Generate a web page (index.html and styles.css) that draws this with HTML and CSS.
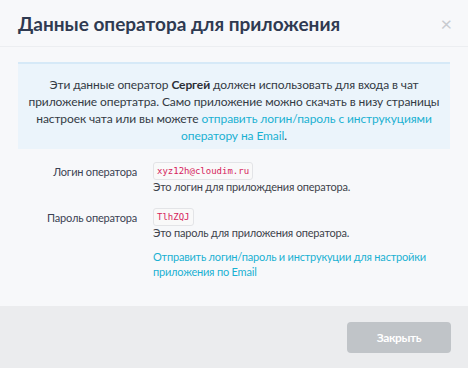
FILE: index.html
```html
<!DOCTYPE html>
<html lang="ru">

<head>
  <meta charset="utf-8">
  <title>Данные оператора для приложения</title>
  <link rel="stylesheet" href="styles.css">
</head>

<body>
  <div class="modal">
    <div class="modal-header">
      <h1>Данные оператора для приложения</h1>
      <span class="close">&times;</span>
    </div>

    <div class="modal-body">
      <div class="info">
        Эти данные оператор <b>Сергей</b> должен использовать для входа в чат
        приложение опертатра. Само приложение можно скачать в низу страницы
        настроек чата или вы можете <a href="#">отправить логин/пароль с инструкуциями
        оператору на Email</a>.
      </div>

      <div class="row">
        <div class="label">Логин оператора</div>
        <div class="field">
          <code>xyz12h@cloudim.ru</code>
          <div class="help">Это логин для прилождения оператора.</div>
        </div>
      </div>

      <div class="row">
        <div class="label">Пароль оператора</div>
        <div class="field">
          <code>TlhZQJ</code>
          <div class="help">Это пароль для приложения оператора.</div>
        </div>
      </div>

      <div class="row row-send">
        <div class="label"></div>
        <div class="field">
          <a class="send" href="#">Отправить логин/пароль и инструкуции для настройки приложения по Email</a>
        </div>
      </div>
    </div>

    <div class="modal-footer">
      <button type="button" class="btn-close">Закрыть</button>
    </div>
  </div>
</body>

</html>
```

FILE: styles.css
```css
html,
body {
  margin: 0;
  height: 100%;
}

body {
  font-family: Lato, "Liberation Sans", sans-serif;
  background-color: #f7f8fa;
  color: #3b4252;
}

.modal {
  height: 368px;
  display: flex;
  flex-direction: column;
  background-color: #f7f8fa;
}

.modal-header {
  display: flex;
  align-items: center;
  justify-content: space-between;
  height: 46px;
  padding: 0 18px;
  border-bottom: 1px solid #eceef1;
}

.modal-header h1 {
  margin: 0;
  font-size: 19px;
  font-weight: bold;
  color: #2f3a51;
}

.close {
  font-size: 20px;
  color: #c8cbd0;
  margin-right: -2px;
}

.modal-body {
  flex: 1;
  padding: 15px 18px 0;
}

.info {
  background-color: #ebf4fb;
  border-top: 2px solid #d6e9f7;
  padding: 12px 4px 5px;
  text-align: center;
  font-size: 12px;
  letter-spacing: -0.1px;
  line-height: 17px;
  color: #333a44;
}

.info b {
  color: #2b2f36;
}

a {
  color: #1ab1d2;
  text-decoration: none;
}

.row {
  display: flex;
  margin-top: 13px;
}

.row+.row {
  margin-top: 14px;
}

.row-send {
  margin-top: 9px !important;
}

.label {
  width: 119px;
  text-align: right;
  padding-right: 16px;
  padding-top: 2px;
  font-size: 11px;
  letter-spacing: -0.2px;
  line-height: 15px;
  color: #3b4252;
}

.field {
  flex: 1;
  font-size: 11px;
  letter-spacing: -0.2px;
  line-height: 15px;
}

code {
  display: inline-block;
  font-family: "DejaVu Sans Mono", monospace;
  font-size: 9px;
  letter-spacing: 0;
  line-height: 14px;
  color: #d6245c;
  background-color: #f9f9f9;
  border: 1px solid #e3e4e7;
  border-radius: 3px;
  padding: 1px 3px;
}

.help {
  line-height: 14px;
  color: #3e434b;
}

.send {
  display: block;
  padding-right: 20px;
}

.modal-footer {
  display: flex;
  justify-content: flex-end;
  align-items: center;
  height: 62px;
  padding: 0 17px;
  background-color: #ebecee;
}

.btn-close {
  width: 104px;
  height: 31px;
  border: none;
  border-radius: 4px;
  background-color: #c0c4c8;
  color: white;
  font-family: Lato, "Liberation Sans", sans-serif;
  font-size: 12px;
  letter-spacing: -0.4px;
  font-weight: bold;
}
```
